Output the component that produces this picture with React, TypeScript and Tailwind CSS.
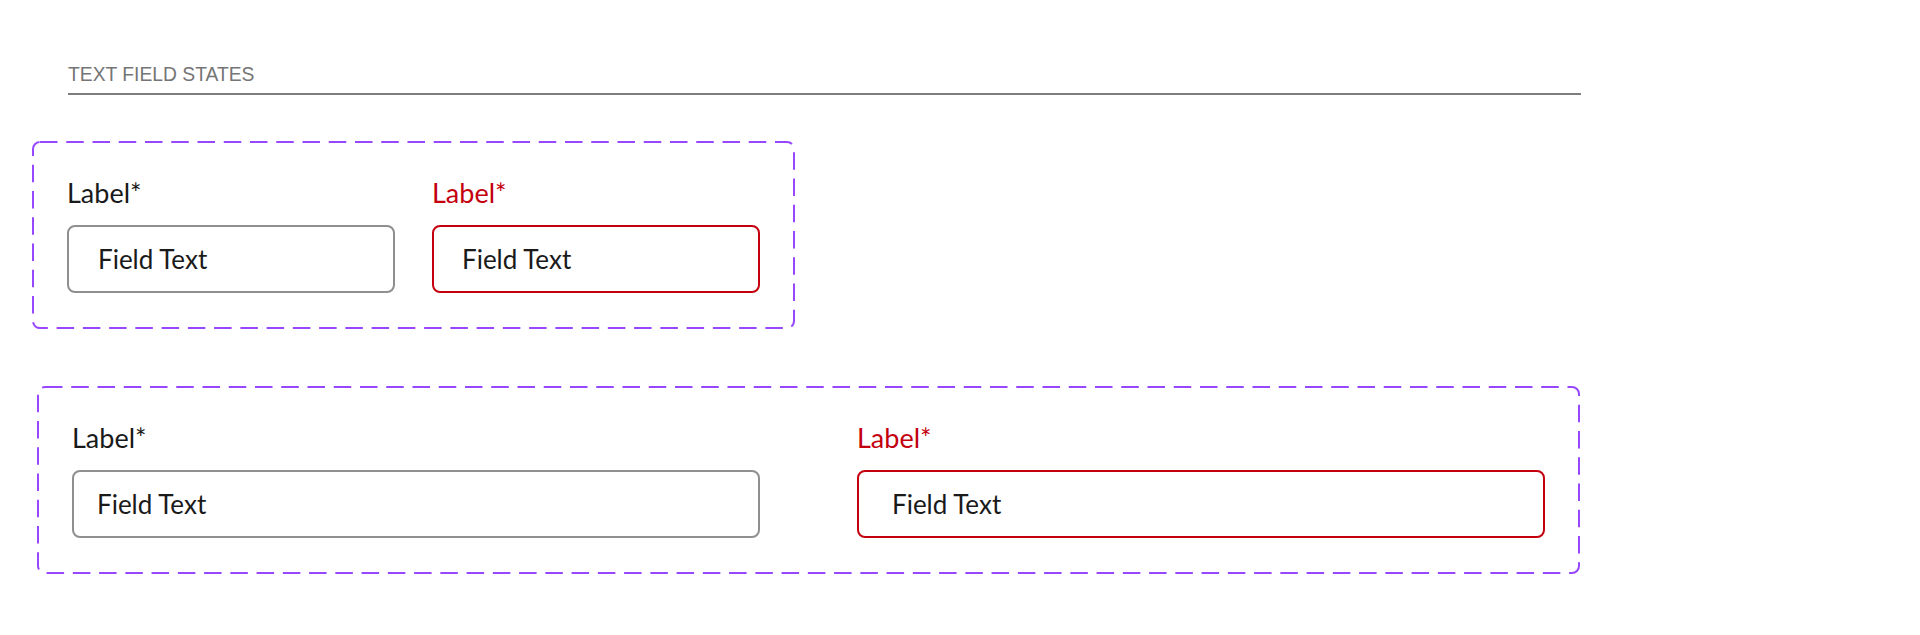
import React from "react";

type FieldProps = {
  error?: boolean;
  width: string;
  padding: string;
};

const Field = ({ error, width, padding }: FieldProps) => {
  return (
    <div className={`flex flex-col ${width}`}>
      <label
        className={`text-[27px] leading-[32px] ${error ? "text-[#c4000f]" : "text-[#1a1a1a]"}`}
      >
        Label*
      </label>
      <div
        className={`mt-[16px] flex h-[68px] items-center rounded-[8px] border-2 bg-white text-[26px] leading-[32px] text-[#1a1a1a] ${padding} ${
          error ? "border-[#c4000f]" : "border-[#8f8f8f]"
        }`}
      >
        Field Text
      </div>
    </div>
  );
};

const DashedBox = ({ className, children }: { className: string; children: React.ReactNode }) => {
  return (
    <div className={`relative px-[35px] pt-[36px] pb-[36px] ${className}`}>
      <svg className="pointer-events-none absolute inset-[1px] h-[calc(100%-2px)] w-[calc(100%-2px)] overflow-visible">
        <rect
          x="0"
          y="0"
          width="100%"
          height="100%"
          rx="7"
          fill="none"
          stroke="#9747FF"
          strokeWidth="2"
          strokeDasharray="17.5 8.75"
        />
      </svg>
      {children}
    </div>
  );
};

export default function App() {
  return (
    <div className="min-h-[635px] bg-white pt-[64px] font-['Lato',sans-serif]">
      <div className="ml-[68px] w-[1513px]">
        <h2 className="font-['Liberation_Sans',Arial,sans-serif] text-[19.3px] leading-[22px] text-[#757575]">
          TEXT FIELD STATES
        </h2>
        <div className="mt-[7px] h-[2px] bg-[#7d7d7d]" />
      </div>

      <DashedBox className="mt-[46px] ml-[32px] w-[763px]">
        <div className="flex gap-[37px]">
          <Field width="w-[328px]" padding="pl-[29px]" />
          <Field width="w-[328px]" padding="pl-[28px]" error />
        </div>
      </DashedBox>

      <DashedBox className="mt-[57px] ml-[37px] w-[1543px]">
        <div className="flex gap-[97px]">
          <Field width="w-[688px]" padding="pl-[23px]" />
          <Field width="w-[688px]" padding="pl-[33px]" error />
        </div>
      </DashedBox>
    </div>
  );
}
